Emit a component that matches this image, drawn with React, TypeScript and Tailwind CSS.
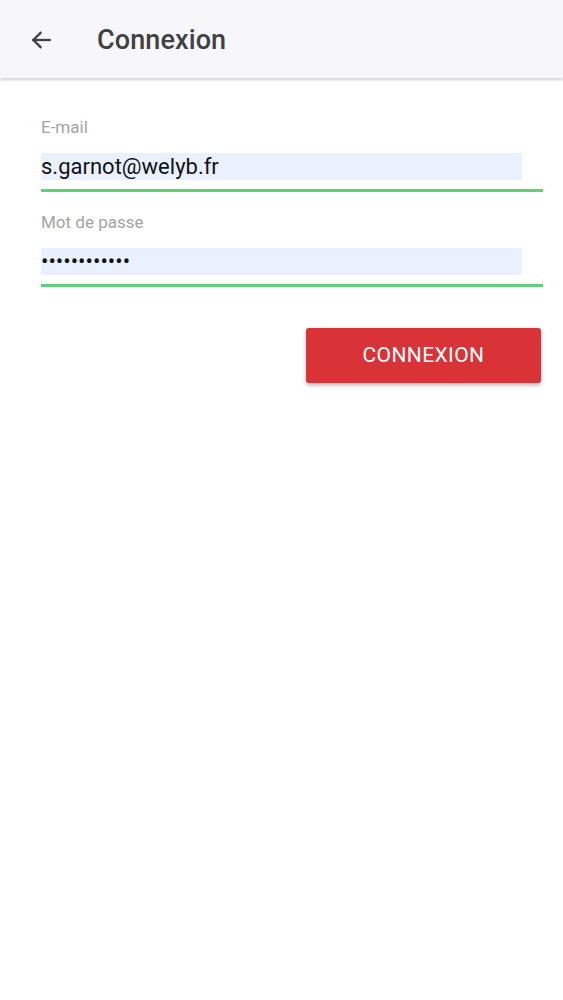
import React from "react";

export default function App() {
  return (
    <div className="min-h-[1000px] w-full bg-white" style={{ fontFamily: "Roboto, 'Noto Sans', sans-serif" }}>
      <header className="flex h-[78px] items-center bg-[#f7f6f9] shadow-[0_2px_3px_rgba(0,0,0,0.18)]">
        <div className="ml-[28px] mt-[2px] flex h-[26px] w-[26px] items-center justify-center">
          <svg width="26" height="26" viewBox="0 0 24 24" fill="none" stroke="#3f3f44" strokeWidth="2.1" strokeLinecap="square">
            <path d="M20 12H5" />
            <path d="M11.5 5.5L5 12l6.5 6.5" strokeLinejoin="miter" />
          </svg>
        </div>
        <h1 className="ml-[43px] mt-[3px] text-[27px] font-medium tracking-[0.1px] text-[#414045]">Connexion</h1>
      </header>

      <main className="pl-[41px] pr-[20px] pt-[38px]">
        <div className="flex flex-col">
          <label className="text-[17px] leading-[22px] text-[#a3a3a3]">E-mail</label>
          <div className="mt-[15px] flex flex-col">
            <div className="mr-[21px] flex h-[27px] items-center bg-[#e9f0fe]">
              <span className="text-[22px] leading-none text-[#111]">s.garnot@welyb.fr</span>
            </div>
            <div className="mt-[9px] h-[3px] bg-[#5dd17b]" />
          </div>
        </div>

        <div className="mt-[19px] flex flex-col">
          <label className="text-[17px] leading-[22px] text-[#a3a3a3]">Mot de passe</label>
          <div className="mt-[15px] flex flex-col">
            <div className="mr-[21px] flex h-[27px] items-center bg-[#e9f0fe]">
              <span className="text-[22px] leading-none tracking-[0px] text-[#111]">••••••••••••</span>
            </div>
            <div className="mt-[9px] h-[3px] bg-[#5dd17b]" />
          </div>
        </div>

        <div className="mt-[41px] flex justify-end pr-[2px]">
          <button className="flex h-[55px] w-[235px] items-center justify-center rounded-[3px] bg-[#d93337] text-[21px] font-normal tracking-[0.4px] text-white shadow-[0_2px_4px_rgba(0,0,0,0.3)]">
            CONNEXION
          </button>
        </div>
      </main>
    </div>
  );
}
